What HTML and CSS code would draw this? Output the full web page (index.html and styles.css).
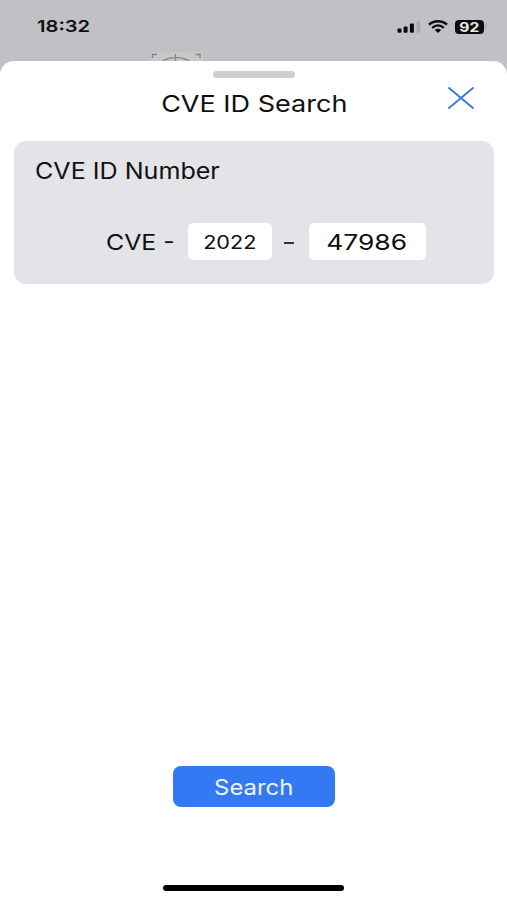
FILE: index.html
```html
<!DOCTYPE html>
<html lang="en">
<head>
<meta charset="utf-8">
<meta name="viewport" content="width=device-width, initial-scale=1">
<title>CVE ID Search</title>
<link rel="stylesheet" href="styles.css">
</head>
<body>
<header class="status">
  <span class="wide time">18:32</span>
  <div class="indicators">
    <svg class="signal" width="24" height="14" viewBox="0 0 24 14"><rect x="0.500" y="8.500" width="4" height="4.200" rx="1"/><rect x="6.600" y="6.500" width="4" height="6.200" rx="1"/><rect x="12.900" y="3.500" width="4" height="9.200" rx="1"/><rect x="19.500" y="1" width="3.600" height="11.700" rx="1" fill="#a9a8ac"/></svg>
    <svg class="wifi" width="20" height="13" viewBox="0 0 20 13" fill="none" stroke="#0b0b0c" stroke-width="2.4"><path d="M1 4.600C6 .1 14 .1 19 4.600"/><path d="M4.200 7.800c3.500-3 8.100-3 11.600 0"/><path d="M6.800 9.900q3.200-2.200 6.400 0L10 12.900z" fill="#0b0b0c" stroke="none"/></svg>
    <div class="battery"><span class="wide">92</span></div>
    <i class="battery-cap"></i>
  </div>
  <svg class="emblem" width="53" height="9" viewBox="0 0 53 9" fill="none"><rect width="53" height="9" fill="#c9c8c9"/><path d="M2.500 6V2.500H7M45.500 2.500h4.500V6" stroke="#858487" stroke-width="1.500"/><path d="M13 8.700Q26 2.200 39 8.700M25.500 2v7" stroke="#8a8784" stroke-width="1.300"/></svg>
</header>
<main class="sheet">
  <div class="grabber"></div>
  <div class="heading">
    <h1 class="wide">CVE ID Search</h1>
    <button class="close" aria-label="Close"><svg width="26" height="22" viewBox="0 0 26 22" fill="none" stroke="#3478d8" stroke-width="1.8" stroke-linecap="round"><path d="M1 1l24 20M25 1L1 21"/></svg></button>
  </div>
  <section class="card">
    <h2 class="wide">CVE ID Number</h2>
    <div class="row">
      <span class="prefix"><span class="wide">CVE -</span></span>
      <div class="field year"><span class="wide">2022</span></div>
      <span class="dash"></span>
      <div class="field number"><span class="wide">47986</span></div>
    </div>
  </section>
  <button class="search"><span class="wide">Search</span></button>
  <div class="home"></div>
</main>
</body>
</html>
```
FILE: styles.css
```css
* { box-sizing: border-box; }
body {
  margin: 0;
  height: 900px;
  display: flex;
  flex-direction: column;
  overflow: hidden;
  background: #c1c0c5;
  color: #101012;
  font-family: Inter, "Liberation Sans", sans-serif;
}
h1, h2 { margin: 0; font-weight: 400; }
button { border: 0; padding: 0; background: none; font: inherit; }
svg { display: block; }
.wide { display: inline-block; white-space: nowrap; transform: scaleX(1.2); }
.status {
  position: relative;
  height: 61px;
  padding: 16px 20px 0 37px;
  display: flex;
  justify-content: space-between;
  align-items: flex-start;
}
.time { font-size: 16.5px; line-height: 21px; font-weight: 600; transform: scaleX(1.22); transform-origin: left; }
.indicators { display: flex; align-items: center; height: 21px; }
.signal { margin-right: 7px; fill: #0b0b0c; }
.wifi { margin-right: 7px; }
.battery {
  width: 29px;
  height: 14px;
  border-radius: 4px;
  background: #0b0b0c;
  color: #e8e8ea;
  font-size: 13px;
  line-height: 14px;
  font-weight: 700;
  text-align: center;
}
.battery-cap { width: 2px; height: 5px; margin-left: 1px; border-radius: 0 2px 2px 0; background: #a5a4a8; }
.emblem { position: absolute; left: 150px; top: 52px; }
.sheet {
  flex: 1;
  display: flex;
  flex-direction: column;
  align-items: center;
  border-radius: 14px 14px 0 0;
  background: #fff;
}
.grabber { width: 82px; height: 7px; margin-top: 10px; border-radius: 4px; background: #cfcfd1; }
.heading {
  width: 100%;
  height: 63px;
  padding: 9px 33px 0 0;
  display: grid;
  grid-template-columns: 1fr auto 1fr;
  align-items: start;
}
.heading h1 { grid-column: 2; margin-left: 34px; font-size: 23px; line-height: 35px; transform: scaleX(1.175); }
.close { justify-self: end; }
.card {
  width: 480px;
  height: 143px;
  padding: 14px 0 0 21px;
  border-radius: 12px;
  background: #e4e3e8;
}
.card h2 { display: block; width: fit-content; font-size: 22.5px; line-height: 32px; transform: scaleX(1.115); transform-origin: left; }
.row { display: flex; align-items: center; margin: 36px 0 0 71px; height: 37px; }
.prefix { width: 82px; font-size: 22px; }
.prefix .wide { transform: scaleX(1.13); transform-origin: left; }
.field {
  height: 37px;
  display: flex;
  align-items: center;
  justify-content: center;
  border-radius: 5px;
  background: #fff;
}
.year { width: 84px; font-size: 18.5px; }
.year .wide { transform: scaleX(1.17); }
.number { width: 117px; font-size: 22px; }
.dash { width: 10px; height: 2px; margin: 2px 15px 0 12px; background: #333336; }
.search {
  width: 162px;
  height: 41px;
  margin-top: auto;
  border-radius: 8px;
  background: #3478f4;
  color: #eef6ff;
  font-size: 21.5px;
}
.search .wide { transform: scaleX(1.11); }
.home { width: 181px; height: 6px; margin: 78px 0 9px; border-radius: 3px; background: #000; }
```
